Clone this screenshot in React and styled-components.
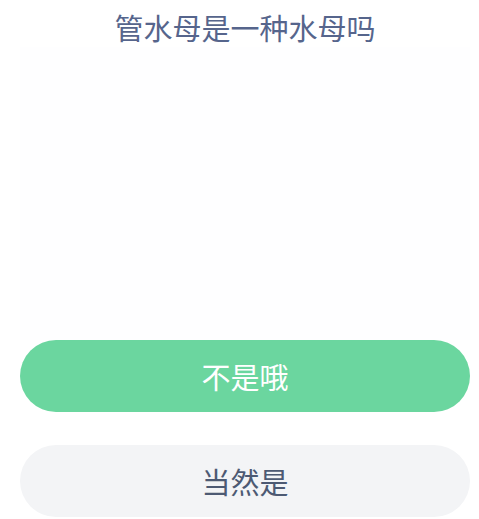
import React from 'react';
import styled, { createGlobalStyle } from 'styled-components';

const GlobalStyle = createGlobalStyle`
  html, body {
    margin: 0;
    padding: 0;
    background: #ffffff;
  }
  body {
    font-family: "Noto Sans CJK SC", "Noto Sans", sans-serif;
  }
`;

const Page = styled.div`
  width: 479px;
  height: 519px;
  display: flex;
  flex-direction: column;
  box-sizing: border-box;
  padding: 0 9px 2px 20px;
  overflow: hidden;
`;

const Title = styled.h1`
  margin: 0;
  padding-top: 7px;
  font-size: 29px;
  font-weight: 400;
  line-height: 40px;
  color: #56658c;
  text-align: center;
`;

const Canvas = styled.div`
  flex: 1;
  background: #fefeff;
`;

const Options = styled.div`
  display: flex;
  flex-direction: column;
  gap: 33px;
`;

const Option = styled.button`
  height: 72px;
  border: none;
  border-radius: 36px;
  background: ${p => (p.$primary ? '#6bd69f' : '#f3f4f6')};
  color: ${p => (p.$primary ? '#ffffff' : '#4d5a73')};
  font-family: inherit;
  font-size: 29px;
  font-weight: 400;
  cursor: pointer;
  padding: 0;
`;

export default function App() {
  return (
    <>
      <GlobalStyle />
      <Page>
        <Title>管水母是一种水母吗</Title>
        <Canvas />
        <Options>
          <Option $primary>不是哦</Option>
          <Option>当然是</Option>
        </Options>
      </Page>
    </>
  );
}
